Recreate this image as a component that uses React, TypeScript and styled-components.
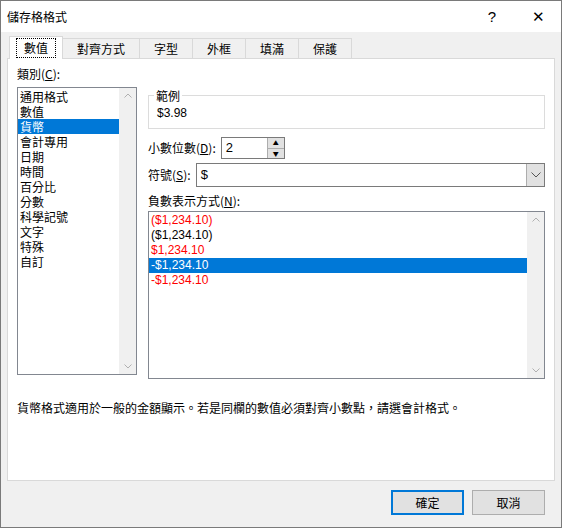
import React from "react";
import styled, { createGlobalStyle } from "styled-components";

const G = createGlobalStyle`
  html,body{margin:0;padding:0;background:#fff;}
  body{font-family:"Noto Sans CJK TC","Noto Sans",sans-serif;font-size:12px;color:#000;}
`;
const Win = styled.div`width:562px;height:528px;box-sizing:border-box;border:1px solid #7a7a7a;background:#f0f0f0;display:flex;flex-direction:column;`;
const Title = styled.div`height:31px;background:#fff;display:flex;align-items:center;padding-left:6px;font-size:12px;`;
const TitleText = styled.div`flex:1;`;
const TBtn = styled.div`width:46px;height:31px;display:flex;align-items:center;justify-content:center;font-size:15px;font-family:"Liberation Sans",sans-serif;`;
const Body = styled.div`padding:4px 6px 0 6px;display:flex;flex-direction:column;`;
const Tabs = styled.div`display:flex;height:22px;padding-left:2px;align-items:flex-end;`;
const Tab = styled.div<{ $a?: boolean }>`height:${p => p.$a ? 23 : 20}px;box-sizing:border-box;border:1px solid #d9d9d9;border-bottom:none;margin-right:-1px;background:${p => p.$a ? "#fff" : "#f0f0f0"};padding:0 ${p => p.$a ? 6 : 14}px;display:flex;align-items:center;justify-content:center;position:relative;z-index:${p => p.$a ? 1 : 0};margin-bottom:${p => p.$a ? -1 : 0}px;`;
const Focus = styled.span`border:1px dotted #000;padding:0 7px;line-height:18px;`;
const Panel = styled.div`height:423px;box-sizing:border-box;background:#fff;border:1px solid #d9d9d9;padding:7px 9px 0 9px;display:flex;flex-direction:column;`;
const Cols = styled.div`display:flex;gap:11px;`;
const Col = styled.div<{ $w?: number }>`display:flex;flex-direction:column;${p => p.$w ? `width:${p.$w}px;` : "flex:1;"}`;
const Label = styled.div`height:16px;line-height:16px;`;
const ListBox = styled.div<{ $h: number }>`height:${p => p.$h}px;box-sizing:border-box;border:1px solid #828790;display:flex;background:#fff;`;
const Items = styled.div`flex:1;padding-top:1px;`;
const Item = styled.div<{ $sel?: boolean; $c?: string }>`height:15px;line-height:15px;padding-left:2px;background:${p => p.$sel ? "#0078d7" : "transparent"};color:${p => p.$sel ? "#fff" : p.$c || "#000"};font-family:${p => p.$c !== undefined ? '"Liberation Sans",sans-serif' : "inherit"};font-size:12px;overflow:hidden;`;
const SB = styled.div`width:17px;background:#f0f0f0;display:flex;flex-direction:column;justify-content:space-between;align-items:center;padding:5px 0;`;
const Group = styled.div`position:relative;margin-top:9px;border:1px solid #dcdcdc;height:34px;box-sizing:border-box;padding:10px 8px 0 8px;`;
const Legend = styled.div`position:absolute;left:5px;top:-8px;background:#fff;padding:0 2px;line-height:15px;`;
const Sample = styled.div`font-family:"Liberation Sans",sans-serif;font-size:12px;`;
const Row = styled.div`display:flex;align-items:center;gap:5px;`;
const Spin = styled.div`width:64px;height:22px;box-sizing:border-box;border:1px solid #7a7a7a;display:flex;background:#fff;`;
const SpinText = styled.div`flex:1;padding:2px 4px;font-family:"Liberation Sans",sans-serif;font-size:13px;`;
const SpinBtns = styled.div`width:16px;display:flex;flex-direction:column;border-left:1px solid #adadad;`;
const SpinBtn = styled.div`flex:1;background:#e1e1e1;display:flex;align-items:center;justify-content:center;font-size:6px;border-bottom:1px solid #adadad;&:last-child{border-bottom:none;}`;
const Select = styled.div`flex:1;height:24px;box-sizing:border-box;border:1px solid #7a7a7a;display:flex;background:#fff;`;
const SelText = styled.div`flex:1;padding:3px 4px;font-family:"Liberation Sans",sans-serif;font-size:13px;`;
const SelBtn = styled.div`width:17px;background:#e1e1e1;border-left:1px solid #adadad;display:flex;align-items:center;justify-content:center;`;
const Desc = styled.div`margin-top:20px;`;
const Footer = styled.div`display:flex;justify-content:flex-end;gap:8px;padding:9px 10px 0 0;`;
const Btn = styled.div<{ $d?: boolean }>`width:73px;height:25px;box-sizing:border-box;border:${p => p.$d ? "2px solid #0078d7" : "1px solid #adadad"};background:#e1e1e1;display:flex;align-items:center;justify-content:center;`;
const Sp = styled.div<{ $h: number }>`height:${p => p.$h}px;flex:none;`;

const cats = ["通用格式", "數值", "貨幣", "會計專用", "日期", "時間", "百分比", "分數", "科學記號", "文字", "特殊", "自訂"];
const negs: [string, string][] = [["($1,234.10)", "#ff0000"], ["($1,234.10)", "#000"], ["$1,234.10", "#ff0000"], ["-$1,234.10", "#000"], ["-$1,234.10", "#ff0000"]];
const Chev = ({ up }: { up?: boolean }) => (
  <svg width="8" height="5" viewBox="0 0 8 5"><path d={up ? "M0.5 4.5L4 1L7.5 4.5" : "M0.5 0.5L4 4L7.5 0.5"} fill="none" stroke="#b0b0b0" /></svg>
);

export default function App() {
  return (
    <Win>
      <G />
      <Title><TitleText>儲存格格式</TitleText><TBtn>?</TBtn><TBtn>✕</TBtn></Title>
      <Body>
        <Tabs>
          <Tab $a><Focus>數值</Focus></Tab>
          {["對齊方式", "字型", "外框", "填滿", "保護"].map(t => <Tab key={t}>{t}</Tab>)}
        </Tabs>
        <Panel>
          <Cols>
            <Col $w={120}>
              <Label>類別(<u>C</u>):</Label>
              <Sp $h={5} />
              <ListBox $h={288}>
                <Items>{cats.map((c, i) => <Item key={c} $sel={i === 2}>{c}</Item>)}</Items>
                <SB><Chev up /><Chev /></SB>
              </ListBox>
            </Col>
            <Col>
              <Sp $h={20} />
              <Group><Legend>範例</Legend><Sample>$3.98</Sample></Group>
              <Sp $h={8} />
              <Row><Label>小數位數(<u>D</u>):</Label><Spin><SpinText>2</SpinText><SpinBtns><SpinBtn>▲</SpinBtn><SpinBtn>▼</SpinBtn></SpinBtns></Spin></Row>
              <Sp $h={4} />
              <Row><Label>符號(<u>S</u>):</Label><Select><SelText>$</SelText><SelBtn><svg width="10" height="6" viewBox="0 0 10 6"><path d="M0.5 0.5L5 5L9.5 0.5" fill="none" stroke="#555" /></svg></SelBtn></Select></Row>
              <Sp $h={6} />
              <Label>負數表示方式(<u>N</u>):</Label>
              <Sp $h={2} />
              <ListBox $h={168}>
                <Items>{negs.map(([t, c], i) => <Item key={i} $c={c} $sel={i === 3}>{t}</Item>)}</Items>
                <SB><Chev up /><Chev /></SB>
              </ListBox>
            </Col>
          </Cols>
          <Desc>貨幣格式適用於一般的金額顯示。若是同欄的數值必須對齊小數點，請選會計格式。</Desc>
        </Panel>
        <Footer><Btn $d>確定</Btn><Btn>取消</Btn></Footer>
      </Body>
    </Win>
  );
}
